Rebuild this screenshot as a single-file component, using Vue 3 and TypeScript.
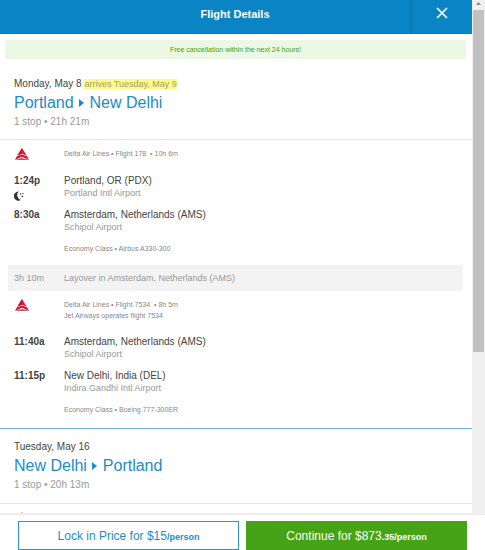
<script setup lang="ts">
interface Stop {
  time: string
  place: string
  airport: string
  overnight?: boolean
}

interface Segment {
  info: string[]
  stops: Stop[]
  cabin: string
}

const segments: Segment[] = [
  {
    info: ['Delta Air Lines • Flight 178  • 10h 6m'],
    stops: [
      { time: '1:24p', place: 'Portland, OR (PDX)', airport: 'Portland Intl Airport', overnight: true },
      { time: '8:30a', place: 'Amsterdam, Netherlands (AMS)', airport: 'Schipol Airport' },
    ],
    cabin: 'Economy Class • Airbus A330-300',
  },
  {
    info: ['Delta Air Lines • Flight 7534  • 8h 5m', 'Jet Airways operates flight 7534'],
    stops: [
      { time: '11:40a', place: 'Amsterdam, Netherlands (AMS)', airport: 'Schipol Airport' },
      { time: '11:15p', place: 'New Delhi, India (DEL)', airport: 'Indira Gandhi Intl Airport' },
    ],
    cabin: 'Economy Class • Boeing 777-300ER',
  },
]
</script>

<template>
  <div class="dialog">
    <div class="viewport">
      <main class="content">
        <header class="bar">
          <h1>Flight Details</h1>
          <button class="close" type="button" aria-label="Close">
            <svg width="12" height="12" viewBox="0 0 12 12"><path d="M1 1l10 10M11 1L1 11" fill="none" stroke="#fff" stroke-width="1.7" /></svg>
          </button>
        </header>

        <p class="notice">Free cancellation within the next 24 hours!</p>

        <section class="trip">
          <p class="date">Monday, May 8 <mark>arrives Tuesday, May 9</mark></p>
          <h2>Portland <svg class="arrow" width="5" height="8" viewBox="0 0 5 8"><path d="M0 0l5 4-5 4z" /></svg> New Delhi</h2>
          <p class="stops">1 stop • 21h 21m</p>
        </section>

        <template v-for="(segment, i) in segments" :key="i">
          <div v-if="i > 0" class="layover">
            <span>3h 10m</span>
            <span>Layover in Amsterdam, Netherlands (AMS)</span>
          </div>
          <section class="segment">
            <div class="row carrier">
              <svg class="logo" width="16" height="12" viewBox="0 0 16 12">
                <path d="M8 0l4.6 7.6L8 5.8 3.4 7.6z" fill="#e31837" />
                <path d="M8 0v5.8L3.4 7.6z" fill="#d0142f" />
                <path d="M2.9 8.3L8 6.4l5.1 1.9L15 12 8 8.8 1 12z" fill="#d3173a" />
                <path d="M1 12l7-2L15 12z" fill="#b5536a" />
              </svg>
              <div class="info">
                <p v-for="line in segment.info" :key="line">{{ line }}</p>
              </div>
            </div>
            <div v-for="stop in segment.stops" :key="stop.time" class="row stop">
              <div class="time">
                <span>{{ stop.time }}</span>
                <svg v-if="stop.overnight" width="10" height="10" viewBox="0 0 10 10" fill="#333">
                  <path d="M4.8.5A4.6 4.6 0 1 0 7 8.9 4.9 4.9 0 0 1 4.8.5z" />
                  <circle cx="6.6" cy="3" r=".8" />
                  <circle cx="9" cy="2.6" r=".7" />
                  <circle cx="8.3" cy="5.4" r=".8" />
                </svg>
              </div>
              <div>
                <p class="place">{{ stop.place }}</p>
                <p class="airport">{{ stop.airport }}</p>
              </div>
            </div>
            <p class="cabin">{{ segment.cabin }}</p>
          </section>
        </template>

        <section class="trip return">
          <p class="date">Tuesday, May 16</p>
          <h2>New Delhi <svg class="arrow" width="5" height="8" viewBox="0 0 5 8"><path d="M0 0l5 4-5 4z" /></svg> Portland</h2>
          <p class="stops">1 stop • 20h 13m</p>
        </section>
        <section class="segment">
          <svg class="logo" width="16" height="12" viewBox="0 0 16 12">
            <path d="M8 0l4.6 7.6L8 5.8 3.4 7.6z" fill="#e31837" />
            <path d="M2.9 8.3L8 6.4l5.1 1.9L15 12 8 8.8 1 12z" fill="#d3173a" />
          </svg>
        </section>
      </main>
      <div class="track" aria-hidden="true">
        <svg width="5" height="3" viewBox="0 0 5 3"><path d="M0 3L2.5 0 5 3z" fill="#8a8a8a" /></svg>
        <div class="thumb"></div>
      </div>
    </div>

    <footer class="actions">
      <button class="lock" type="button">Lock in Price for $15<b>/person</b></button>
      <button class="continue" type="button">Continue for $873<b>.35/person</b></button>
    </footer>
  </div>
</template>

<style>
body {
  margin: 0;
  background: #fff;
}
</style>

<style scoped>
.dialog {
  display: flex;
  flex-direction: column;
  height: 100vh;
  font-family: "Liberation Sans", Arial, sans-serif;
  font-size: 10px;
  line-height: 12px;
  color: #444;
}
p, h1, h2 {
  margin: 0;
}
button {
  font-family: inherit;
  cursor: pointer;
}
.viewport {
  display: flex;
  flex: 1;
  min-height: 0;
}
.content {
  flex: 1;
  min-width: 0;
  overflow: hidden;
}
.bar {
  display: flex;
  height: 34px;
  background: #0a84c4;
}
h1 {
  flex: 1;
  padding-left: 60px;
  font-size: 11px;
  line-height: 28px;
  color: #fff;
  text-align: center;
}
.close {
  display: flex;
  justify-content: center;
  width: 62px;
  padding: 7px 0 0;
  border: 0;
  border-left: 2px solid #0878b4;
  background: none;
}
.notice {
  margin: 6px 6px 0 5px;
  background: #eaf8e4;
  color: #41a317;
  font-size: 7px;
  line-height: 19px;
  text-align: center;
}
.trip {
  padding: 19px 14px 11px;
  border-bottom: 1px solid #e4e4e4;
}
mark {
  background: #fdfa8c;
  color: #a39f6c;
  font-size: 9px;
}
h2 {
  margin: 3px 0;
  font-size: 16px;
  font-weight: 400;
  line-height: 20px;
  color: #1a8ccc;
}
.arrow {
  margin: 0 1px;
  fill: #1a8ccc;
  vertical-align: 1px;
}
.stops {
  color: #999;
}
.segment {
  padding: 8px 14px 0;
}
.row {
  display: grid;
  grid-template-columns: 50px 1fr;
}
.logo {
  display: block;
}
.info, .cabin {
  color: #888;
  font-size: 7px;
  line-height: 11px;
}
.info {
  white-space: pre;
}
.carrier {
  margin-bottom: 15px;
}
.stop {
  min-height: 34px;
}
.time {
  display: flex;
  flex-direction: column;
  gap: 4px;
  font-weight: 700;
}
.airport {
  color: #999;
  font-size: 9px;
}
.cabin {
  padding-left: 50px;
}
.layover {
  display: grid;
  grid-template-columns: 50px 1fr;
  margin: 11px 9px 0 8px;
  padding: 0 6px;
  background: #f3f3f3;
  color: #999;
  font-size: 9px;
  line-height: 26px;
}
.return {
  margin-top: 13px;
  padding-top: 12px;
  padding-bottom: 12px;
  border-top: 1px solid #6fb6dc;
}
.track {
  display: flex;
  flex-direction: column;
  align-items: center;
  gap: 5px;
  width: 13px;
  padding-top: 2px;
  background: #f0f0f0;
}
.track svg {
  flex: none;
}
.thumb {
  width: 11px;
  height: 67%;
  background: #c1c1c1;
}
.actions {
  display: grid;
  grid-template-columns: 221px 1fr;
  gap: 7px;
  padding: 6px 18px 0 18px;
  border-top: 2px solid #ededed;
}
.actions button {
  height: 29px;
  padding: 0;
  border: 1px solid #2b95cf;
  background: #fff;
  color: #1a8ccc;
  font-size: 12px;
}
.actions .continue {
  border-color: #45a315;
  background: #45a315;
  color: #fff;
}
.actions b {
  font-size: 9px;
}
</style>
